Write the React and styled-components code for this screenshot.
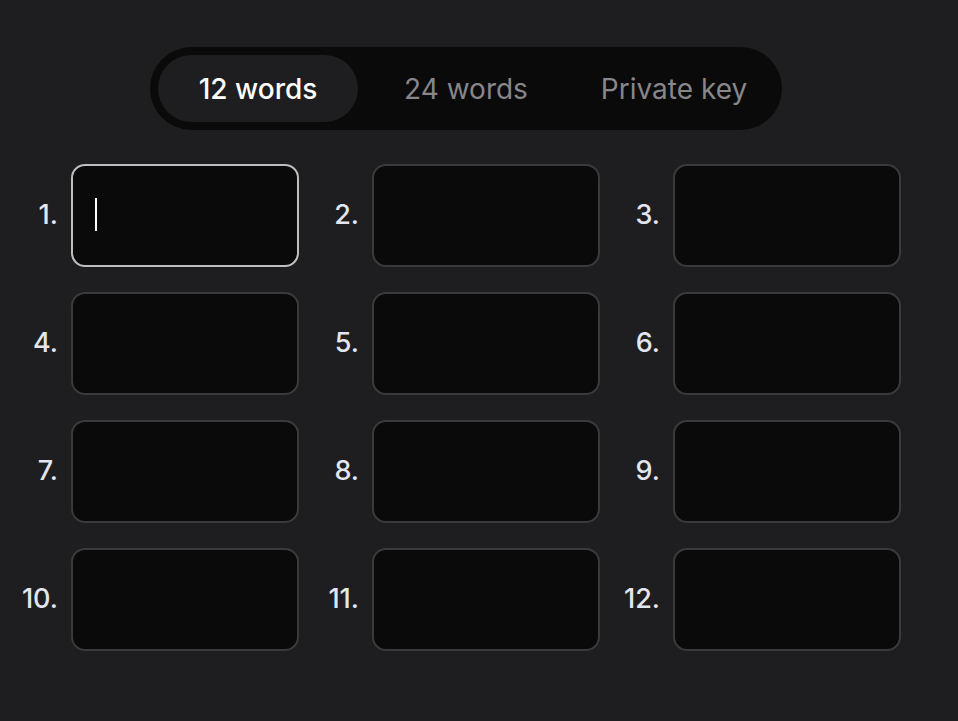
import { useState } from 'react';
import styled, { createGlobalStyle } from 'styled-components';

const Global = createGlobalStyle`
    html, body {
        margin: 0;
        background: #1e1e20;
        font-family: Inter, "Noto Sans", sans-serif;
    }
`;

const Page = styled.div`
    width: 912px;
    padding: 47px 0 0 10px;
    display: flex;
    flex-direction: column;
    align-items: center;
`;

const Tabs = styled.div`
    display: flex;
    gap: 8px;
    padding: 8px;
    background: #0a0a0a;
    border-radius: 42px;
`;

const Tab = styled.button`
    width: 200px;
    height: 67px;
    border: none;
    border-radius: 34px;
    background: ${p => p.$active ? '#1e1e20' : 'transparent'};
    color: ${p => p.$active ? '#ffffff' : '#86868b'};
    font-family: Inter, sans-serif;
    font-size: 28px;
    font-weight: ${p => p.$active ? 500 : 400};
    cursor: pointer;
`;

const Grid = styled.div`
    margin-top: 34px;
    align-self: flex-start;
    display: grid;
    grid-template-columns: repeat(3, 289px);
    column-gap: 12px;
    row-gap: 25px;
`;

const Cell = styled.div`
    display: flex;
    align-items: center;
    gap: 13px;
`;

const Label = styled.span`
    width: 48px;
    margin-top: -2px;
    text-align: right;
    color: #e2e6f0;
    font-size: 27px;
    font-weight: 500;
`;

const Field = styled.div`
    position: relative;
    box-sizing: border-box;
    width: 228px;
    height: 103px;
    background: #0a0a0a;
    border: 2px solid ${p => p.$active ? '#bdbdc2' : '#3a3a3d'};
    border-radius: 14px;

    &::before {
        content: '';
        display: ${p => p.$active ? 'block' : 'none'};
        position: absolute;
        left: 22px;
        top: 32px;
        width: 2px;
        height: 33px;
        background: #ffffff;
    }
`;

const tabs = ['12 words', '24 words', 'Private key'];

const App = () => {
    const [tab, setTab] = useState(0);
    const words = Array.from({ length: 12 }, (_, i) => i + 1);

    return <>
        <Global />
        <Page>
            <Tabs>
                {tabs.map((t, i) =>
                    <Tab key={t} $active={i === tab} onClick={() => setTab(i)}>{t}</Tab>
                )}
            </Tabs>
            <Grid>
                {words.map(n =>
                    <Cell key={n}>
                        <Label>{n}.</Label>
                        <Field $active={n === 1} />
                    </Cell>
                )}
            </Grid>
        </Page>
    </>
}

export default App;
